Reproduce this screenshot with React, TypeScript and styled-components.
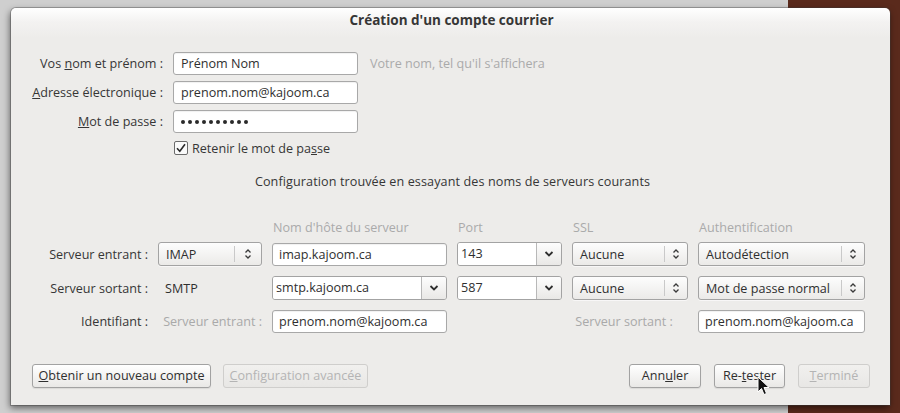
import React from "react";
import styled, { createGlobalStyle } from "styled-components";

const Global = createGlobalStyle`
  html, body {
    margin: 0;
    padding: 0;
  }
  body {
    width: 900px;
    height: 413px;
    overflow: hidden;
    font-family: "Open Sans", "DejaVu Sans", sans-serif;
    font-size: 12.6px;
    color: #363636;
    background: linear-gradient(to right, #cfcfcf 0, #cfcfcf 788px, #5a2a1c 788px, #5a2a1c 100%);
  }
`;

const Desk = styled.div`
  width: 900px;
  height: 413px;
  padding: 8px 10px 8px 11px;
  box-sizing: border-box;
  position: relative;
`;

const Dialog = styled.div`
  width: 879px;
  height: 397px;
  box-sizing: border-box;
  border-radius: 5px 5px 0 0;
  background: linear-gradient(to bottom, #ffffff 0, #f3f2f1 14px, #edecea 30px, #edecea 100%);
  box-shadow: 0 0 0 1px rgba(60, 60, 60, 0.35), -1px 3px 7px rgba(0, 0, 0, 0.55);
  display: flex;
  flex-direction: column;
`;

const Title = styled.div`
  font-weight: bold;
  font-size: 13.5px;
  text-align: center;
  height: 24px;
  line-height: 24px;
  margin-left: 2px;
`;

const TopForm = styled.div`
  display: grid;
  grid-template-columns: 152px 185px auto;
  column-gap: 10px;
  row-gap: 6px;
  margin-top: 20px;
  align-items: center;
`;

const Label = styled.div<{ $muted?: boolean; $left?: boolean }>`
  text-align: ${(p) => (p.$left ? "left" : "right")};
  white-space: nowrap;
  color: ${(p) => (p.$muted ? "#a9a9a9" : "#363636")};
`;

const Hint = styled.div`
  color: #aaaaaa;
  margin-left: 2px;
`;

const TextInput = styled.div<{ $pad?: number }>`
  height: 23px;
  box-sizing: border-box;
  border: 1px solid #a8a8a8;
  border-radius: 3px;
  background: #fff;
  padding-left: ${(p) => p.$pad ?? 7}px;
  line-height: 21px;
  color: #2f2f2f;
  white-space: nowrap;
  overflow: hidden;
  box-shadow: inset 0 1px 1px rgba(0, 0, 0, 0.06);
`;

const Dots = styled.span`
  display: inline-flex;
  gap: 3px;
  vertical-align: middle;
  position: relative;
  top: -1px;
`;

const Dot = styled.i`
  width: 4px;
  height: 4px;
  border-radius: 50%;
  background: #2a2a2a;
`;

const CheckRow = styled.label`
  display: flex;
  align-items: center;
  gap: 4px;
  margin: 7px 0 0 163px;
  height: 16px;
`;

const Info = styled.div`
  text-align: center;
  margin-top: 17px;
  margin-left: 4px;
  letter-spacing: 0.1px;
`;

const Servers = styled.div`
  display: grid;
  grid-template-columns: 137px 104px 175px 105px 116px 167px;
  column-gap: 10px;
  row-gap: 10px;
  margin-top: 29px;
  align-items: center;
`;

const RowTight = styled.div`
  display: contents;
`;

const Head = styled.div`
  color: #aaaaaa;
  padding-left: 1px;
  margin-bottom: -4px;
`;

const SelectBox = styled.div`
  height: 24px;
  box-sizing: border-box;
  border: 1px solid #a3a3a3;
  border-radius: 3px;
  background: linear-gradient(to bottom, #fdfdfd, #ebeae8);
  display: flex;
  align-items: center;
  padding-left: 7px;
  color: #2f2f2f;
  white-space: nowrap;
  box-shadow: 0 1px 0 rgba(255, 255, 255, 0.6);
`;

const SelectText = styled.span`
  flex: 1;
`;

const Arrow = styled.span<{ $w: number }>`
  width: ${(p) => p.$w}px;
  height: 16px;
  border-left: 1px solid #c9c9c9;
  display: flex;
  align-items: center;
  justify-content: center;
`;

const Combo = styled.div`
  height: 24px;
  box-sizing: border-box;
  border: 1px solid #a3a3a3;
  border-radius: 3px;
  display: flex;
  overflow: hidden;
`;

const ComboText = styled.div`
  flex: 1;
  background: #fff;
  line-height: 22px;
  padding-left: 3px;
  color: #2f2f2f;
  border-right: 1px solid #b8b8b8;
`;

const ComboBtn = styled.div`
  width: 24px;
  background: linear-gradient(to bottom, #fdfdfd, #e9e8e6);
  display: flex;
  align-items: center;
  justify-content: center;
`;

const Plain = styled.div`
  padding-left: 7px;
  color: #2f2f2f;
`;

const Footer = styled.div`
  display: flex;
  align-items: center;
  gap: 12px;
  margin-top: 31px;
  padding: 0 20px 0 21px;
`;

const ButtonGroup = styled.div`
  display: flex;
  gap: 13px;
`;

const Spacer = styled.div`
  flex: 1;
`;

const Button = styled.div<{ $w: number; $disabled?: boolean }>`
  width: ${(p) => p.$w}px;
  height: 24px;
  box-sizing: border-box;
  border: 1px solid ${(p) => (p.$disabled ? "#cfcecc" : "#a2a2a2")};
  border-radius: 3px;
  background: ${(p) =>
    p.$disabled
      ? "linear-gradient(to bottom, #f1f0ee, #e8e7e5)"
      : "linear-gradient(to bottom, #ffffff, #e9e8e6)"};
  color: ${(p) => (p.$disabled ? "#b4b4b4" : "#2f2f2f")};
  text-align: center;
  line-height: 22px;
  white-space: nowrap;
  box-shadow: ${(p) => (p.$disabled ? "none" : "0 1px 1px rgba(0,0,0,0.08)")};
`;

const Cursor = styled.svg`
  position: absolute;
  left: 757px;
  top: 376px;
`;

const UpDown = () => (
  <svg width="8" height="12" viewBox="0 0 8 12">
    <path d="M1.5 4.5 L4 2 L6.5 4.5 M1.5 7.5 L4 10 L6.5 7.5" fill="none" stroke="#3a3a3a" strokeWidth="1.3" />
  </svg>
);

const Down = () => (
  <svg width="10" height="8" viewBox="0 0 10 8">
    <path d="M1.5 2 L5 5.5 L8.5 2" fill="none" stroke="#2f2f2f" strokeWidth="1.8" />
  </svg>
);

const Check = () => (
  <svg width="14" height="14" viewBox="0 0 14 14">
    <rect x="0.5" y="0.5" width="13" height="13" rx="1.5" fill="#fafafa" stroke="#6b6b6b" />
    <path d="M3 7.2 L5.8 10.2 L11 3.2" fill="none" stroke="#2b2b2b" strokeWidth="1.6" />
  </svg>
);

const Select = ({ value, w = 22 }: { value: string; w?: number }) => (
  <SelectBox>
    <SelectText>{value}</SelectText>
    <Arrow $w={w}>
      <UpDown />
    </Arrow>
  </SelectBox>
);

const ComboField = ({ value }: { value: string }) => (
  <Combo>
    <ComboText>{value}</ComboText>
    <ComboBtn>
      <Down />
    </ComboBtn>
  </Combo>
);

export default function App() {
  return (
    <>
      <Global />
      <Desk>
        <Dialog>
          <Title>Création d'un compte courrier</Title>

          <TopForm>
            <Label>
              Vos <u>n</u>om et prénom :
            </Label>
            <TextInput>Prénom Nom</TextInput>
            <Hint>Votre nom, tel qu'il s'affichera</Hint>

            <Label>
              <u>A</u>dresse électronique :
            </Label>
            <TextInput>prenom.nom@kajoom.ca</TextInput>
            <div />

            <Label>
              <u>M</u>ot de passe :
            </Label>
            <TextInput>
              <Dots>
                {Array.from({ length: 10 }).map((_, i) => (
                  <Dot key={i} />
                ))}
              </Dots>
            </TextInput>
            <div />
          </TopForm>

          <CheckRow>
            <Check />
            <span>
              Retenir le mot de pa<u>s</u>se
            </span>
          </CheckRow>

          <Info>Configuration trouvée en essayant des noms de serveurs courants</Info>

          <Servers>
            <div />
            <div />
            <Head>Nom d'hôte du serveur</Head>
            <Head>Port</Head>
            <Head>SSL</Head>
            <Head>Authentification</Head>

            <Label>Serveur entrant :</Label>
            <Select value="IMAP" w={26} />
            <TextInput $pad={6}>imap.kajoom.ca</TextInput>
            <ComboField value="143" />
            <Select value="Aucune" />
            <Select value="Autodétection" />

            <Label>Serveur sortant :</Label>
            <Plain>SMTP</Plain>
            <ComboField value="smtp.kajoom.ca" />
            <ComboField value="587" />
            <Select value="Aucune" />
            <Select value="Mot de passe normal" />

            <RowTight>
              <Label>Identifiant :</Label>
              <Label $muted>Serveur entrant :</Label>
              <TextInput $pad={6}>prenom.nom@kajoom.ca</TextInput>
              <div />
              <Label $muted $left>
                &nbsp;Serveur sortant :
              </Label>
              <TextInput $pad={6}>prenom.nom@kajoom.ca</TextInput>
            </RowTight>
          </Servers>

          <Footer>
            <Button $w={179}>
              <u>O</u>btenir un nouveau compte
            </Button>
            <Button $w={145} $disabled>
              <u>C</u>onfiguration avancée
            </Button>
            <Spacer />
            <ButtonGroup>
              <Button $w={72}>
                Ann<u>u</u>ler
              </Button>
              <Button $w={71}>
                Re-<u>t</u>ester
              </Button>
              <Button $w={72} $disabled>
                <u>T</u>erminé
              </Button>
            </ButtonGroup>
          </Footer>
        </Dialog>
        <Cursor width="13" height="20" viewBox="0 0 13 20">
          <path d="M1 1 L1 16 L4.5 12.5 L7 18.5 L9.5 17.5 L7 11.5 L12 11.5 Z" fill="#111" stroke="#fff" strokeWidth="1" />
        </Cursor>
      </Desk>
    </>
  );
}
